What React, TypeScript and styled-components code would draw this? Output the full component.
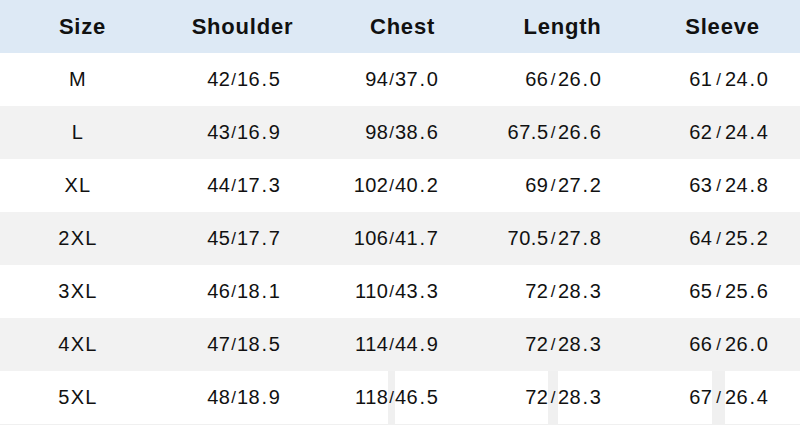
import React from "react";
import styled, { createGlobalStyle } from "styled-components";

const GlobalStyle = createGlobalStyle`
  html, body {
    margin: 0;
    padding: 0;
    background: #f0f0f0;
  }
  body {
    font-family: Arial, "Liberation Sans", sans-serif;
    color: #111;
  }
`;

const Table = styled.div`
  width: 800px;
  display: flex;
  flex-direction: column;
`;

const Row = styled.div<{ $tone: "head" | "white" | "gray" }>`
  display: grid;
  grid-template-columns: repeat(5, 160px);
  height: 53px;
  background: ${(p) =>
    p.$tone === "head" ? "#dde9f5" : p.$tone === "gray" ? "#f2f2f2" : "#ffffff"};
`;

const HeadCell = styled.div`
  display: flex;
  align-items: center;
  justify-content: center;
  padding-left: 5px;
  font-size: 22px;
  font-weight: bold;
  letter-spacing: 0.8px;
  color: #111;
`;

const SizeCell = styled.div`
  display: flex;
  align-items: center;
  justify-content: center;
  padding-right: 4px;
  font-size: 20px;
  letter-spacing: 1.3px;
`;

const NumCell = styled.div<{ $left: number; $gap: number }>`
  display: grid;
  grid-template-columns: ${(p) => `${p.$left}px ${p.$gap}px 1fr`};
  align-items: stretch;
  font-size: 20px;
`;

const Part = styled.span<{ $align: "left" | "right" }>`
  display: flex;
  align-items: center;
  justify-content: ${(p) => (p.$align === "right" ? "flex-end" : "flex-start")};
  letter-spacing: 0.5px;
  margin-right: ${(p) => (p.$align === "right" ? "-0.5px" : "0")};
`;

const Dot = styled.span<{ $wide: boolean }>`
  padding: ${(p) => (p.$wide ? "0 1.2px" : "0")};
`;

const Slash = styled.span<{ $mark?: boolean }>`
  display: flex;
  align-items: center;
  justify-content: center;
  font-size: 17px;
  background: ${(p) => (p.$mark ? "#f0f0f0" : "transparent")};
`;

type Col = { left: number; right: number; mark: boolean };

const cols: Col[] = [
  { left: 70, right: 77, mark: false },
  { left: 68, right: 75, mark: true },
  { left: 68, right: 78, mark: true },
  { left: 72, right: 85, mark: true },
];

const headers = ["Size", "Shoulder", "Chest", "Length", "Sleeve"];

const rows: [string, string[]][] = [
  ["M", ["42/16.5", "94/37.0", "66/26.0", "61/24.0"]],
  ["L", ["43/16.9", "98/38.6", "67.5/26.6", "62/24.4"]],
  ["XL", ["44/17.3", "102/40.2", "69/27.2", "63/24.8"]],
  ["2XL", ["45/17.7", "106/41.7", "70.5/27.8", "64/25.2"]],
  ["3XL", ["46/18.1", "110/43.3", "72/28.3", "65/25.6"]],
  ["4XL", ["47/18.5", "114/44.9", "72/28.3", "66/26.0"]],
  ["5XL", ["48/18.9", "118/46.5", "72/28.3", "67/26.4"]],
];

const Value = ({ text, wide }: { text: string; wide: boolean }) => {
  const [a, b] = text.split(".");
  if (b === undefined) return <>{a}</>;
  return (
    <>
      {a}
      <Dot $wide={wide}>.</Dot>
      {b}
    </>
  );
};

export default function App() {
  return (
    <>
      <GlobalStyle />
      <Table>
        <Row $tone="head">
          {headers.map((h) => (
            <HeadCell key={h}>{h}</HeadCell>
          ))}
        </Row>
        {rows.map(([size, vals], i) => {
          const last = i === rows.length - 1;
          return (
            <Row key={size} $tone={i % 2 === 0 ? "white" : "gray"}>
              <SizeCell>{size}</SizeCell>
              {vals.map((v, j) => {
                const [cm, inch] = v.split("/");
                const c = cols[j];
                return (
                  <NumCell key={j} $left={c.left} $gap={c.right - c.left}>
                    <Part $align="right">
                      <Value text={cm} wide={false} />
                    </Part>
                    <Slash $mark={last && c.mark}>/</Slash>
                    <Part $align="left">
                      <Value text={inch} wide={true} />
                    </Part>
                  </NumCell>
                );
              })}
            </Row>
          );
        })}
      </Table>
    </>
  );
}
